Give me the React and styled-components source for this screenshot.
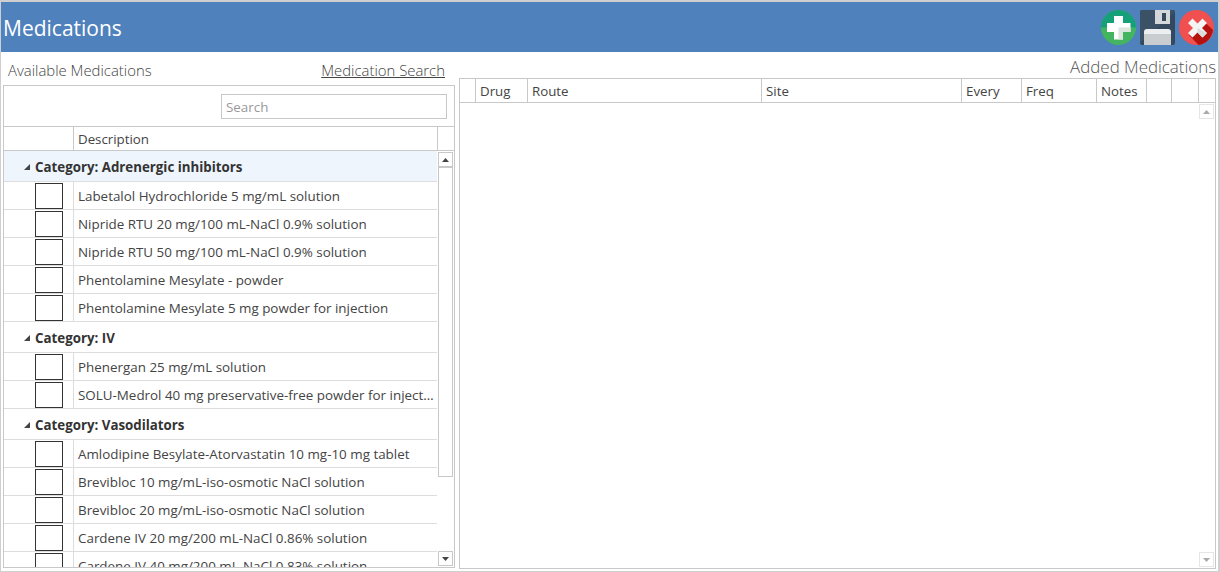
import React from "react";
import styled, { createGlobalStyle } from "styled-components";

const GlobalStyle = createGlobalStyle`
	html, body {
		margin: 0;
		padding: 0;
		background: #fff;
	}
	* {
		box-sizing: border-box;
	}
`;

const Window = styled.div`
	width: 1220px;
	height: 572px;
	background: #fff;
	border-style: solid;
	border-color: #cfcfcf;
	border-width: 2px 2px 1px 1px;
	font-family: "Open Sans", "Liberation Sans", sans-serif;
	color: #444;
	overflow: hidden;
	display: flex;
	flex-direction: column;
`;

const TitleBar = styled.div`
	height: 50px;
	flex: none;
	background: #4f81bd;
	display: flex;
	align-items: center;
	justify-content: space-between;
	padding: 0 4px 0 2px;
`;

const Title = styled.h1`
	margin: 2px 0 0;
	font-size: 21px;
	font-weight: 400;
	color: #fff;
`;

const Actions = styled.div`
	display: flex;
	align-items: center;
	gap: 4px;
`;

const Body = styled.div`
	flex: 1;
	min-height: 0;
	display: flex;
	padding-left: 2px;
	gap: 4px;
`;

const LeftColumn = styled.div`
	width: 452px;
	flex: none;
	display: flex;
	flex-direction: column;
`;

const RightColumn = styled.div`
	width: 757px;
	flex: none;
	display: flex;
	flex-direction: column;
`;

const LeftHead = styled.div`
	height: 33px;
	flex: none;
	display: flex;
	align-items: center;
	justify-content: space-between;
	padding: 2px 10px 0 5px;
	font-size: 14.9px;
	font-weight: 300;
`;

const SearchLink = styled.a`
	text-decoration: underline;
	color: #444;
`;

const RightHead = styled.div`
	height: 26px;
	flex: none;
	text-align: right;
	font-size: 16.9px;
	font-weight: 300;
	line-height: 29px;
	color: #555;
`;

const Panel = styled.div`
	height: ${(p) => p.$h}px;
	border: 1px solid #c8c8c8;
	display: flex;
	flex-direction: column;
	position: relative;
	overflow: hidden;
`;

const SearchRow = styled.div`
	height: 41px;
	flex: none;
	display: flex;
	justify-content: flex-end;
	padding: 8px 7px 0 0;
	border-bottom: 1px solid #c8c8c8;
`;

const SearchInput = styled.input`
	width: 226px;
	height: 25px;
	border: 1px solid #c8c8c8;
	padding: 0 4px;
	font-family: inherit;
	font-size: 13.4px;
	outline: none;
	&::placeholder {
		color: #999;
	}
`;

const GridHead = styled.div`
	height: 24px;
	flex: none;
	display: flex;
	border-bottom: 1px solid #c8c8c8;
`;

const HeadCell = styled.div`
	width: ${(p) => p.$w}px;
	flex: ${(p) => (p.$w ? "none" : "1")};
	border-right: ${(p) => (p.$last ? "none" : "1px solid #c8c8c8")};
	padding-left: 4px;
	font-size: 13.3px;
	line-height: 24px;
	white-space: nowrap;
`;

const ListArea = styled.div`
	flex: 1;
	min-height: 0;
	display: flex;
	overflow: hidden;
`;

const List = styled.div`
	width: 433px;
	flex: none;
`;

const GroupRow = styled.div`
	height: 31px;
	display: flex;
	align-items: center;
	gap: 5px;
	padding: 2px 0 0 20px;
	font-size: 13.3px;
	font-weight: 700;
	color: #333;
	border-bottom: 1px solid #ddd;
	background: ${(p) => (p.$active ? "#eef5fc" : "#fff")};
`;

const Caret = styled.span`
	width: 0;
	height: 0;
	border-style: solid;
	border-width: 0 0 6px 6px;
	border-color: transparent transparent #444 transparent;
`;

const Row = styled.div`
	height: 28px;
	display: flex;
	border-bottom: 1px solid #ddd;
`;

const CheckCell = styled.div`
	width: 70px;
	flex: none;
	display: flex;
	justify-content: flex-end;
	padding: 1px 10px 0 0;
	border-right: 1px solid #ddd;
`;

const CheckBox = styled.span`
	display: block;
	width: 28px;
	height: 26px;
	border: 1px solid #333;
	background: #fff;
`;

const DescCell = styled.div`
	flex: 1;
	min-width: 0;
	padding: 0 3px 0 4px;
	font-size: 13.4px;
	line-height: 28px;
	white-space: nowrap;
	overflow: hidden;
	text-overflow: ellipsis;
`;

const ScrollTrack = styled.div`
	width: 15px;
	flex: none;
	margin: 1px 0 1px 1px;
	height: 414px;
	display: flex;
	flex-direction: column;
	justify-content: space-between;
	position: relative;
`;

const ScrollButton = styled.div`
	width: 15px;
	height: 15px;
	border: 1px solid #c8c8c8;
	background: #fff;
	display: flex;
	align-items: center;
	justify-content: center;
	color: #444;
`;

const Thumb = styled.div`
	position: absolute;
	top: 15px;
	left: 0;
	width: 15px;
	height: 310px;
	border: 1px solid #c8c8c8;
	background: #fff;
`;

const RightHeader = styled.div`
	height: 24px;
	flex: none;
	display: flex;
	border-bottom: 1px solid #c8c8c8;
`;

const RightBody = styled.div`
	flex: 1;
	min-height: 0;
	display: flex;
	justify-content: flex-end;
	padding: 1px 1px 1px 0;
`;

const RightScroll = styled.div`
	width: 15px;
	display: flex;
	flex-direction: column;
	justify-content: space-between;
	opacity: 0.45;
`;

const Arrow = ({ up }) => (
	<svg width="9" height="6" viewBox="0 0 9 6">
		<path d={up ? "M4.5 1 L8 5 L1 5 Z" : "M1 1 L8 1 L4.5 5 Z"} fill="#444" />
	</svg>
);

const AddIcon = () => (
	<svg width="35" height="35" viewBox="0 0 35 35">
		<circle cx="17.5" cy="17.5" r="17.5" fill="#43b45f" />
		<path d="M0 17.5a17.5 17.5 0 0 1 35 0z" fill="#16a07a" />
		<path d="M13 6h9v7h7.5v9H22v7.500h-9V22H6v-9h7z" fill="#fff" />
		<path d="M17.5 17.5h12V22H22v7.5h-4.5z" fill="#dce6e0" />
	</svg>
);

const SaveIcon = () => (
	<svg width="35" height="35" viewBox="0 0 35 35">
		<rect width="35" height="35" rx="2" fill="#34495e" />
		<path d="M0 2a2 2 0 0 1 2-2h13v14h15V0h3a2 2 0 0 1 2 2L0 33z" fill="#3b5266" />
		<rect x="15" y="0" width="15" height="14" fill="#d5d8da" />
		<rect x="22" y="3" width="4" height="8" fill="#34495e" />
		<path d="M4 22a3 3 0 0 1 3-3h21a3 3 0 0 1 3 3v13H4z" fill="#eceeef" />
		<rect x="4" y="24" width="27" height="11" fill="#c9cdd0" />
	</svg>
);

const CloseIcon = () => (
	<svg width="35" height="35" viewBox="0 0 35 35">
		<circle cx="17.5" cy="17.5" r="17.5" fill="#f05050" />
		<path d="M23 9.5L34 20a17.5 17.5 0 0 1-14.5 15L10 25z" fill="#b5120f" />
		<path d="M13.5 8.5l5 5 5-5 4.5 4.5-5 5 5 5-4.5 4.5-5-5-5 5-4.500-4.500 5-5-5-5z" fill="#f4f4f4" />
		<path d="M18.500 18l9.500 5-4.500 4.500-5-5z" fill="#dcdcdc" />
	</svg>
);

const groups = [
	{
		name: "Adrenergic inhibitors",
		active: true,
		items: [
			"Labetalol Hydrochloride 5 mg/mL solution",
			"Nipride RTU 20 mg/100 mL-NaCl 0.9% solution",
			"Nipride RTU 50 mg/100 mL-NaCl 0.9% solution",
			"Phentolamine Mesylate - powder",
			"Phentolamine Mesylate 5 mg powder for injection",
		],
	},
	{
		name: "IV",
		items: [
			"Phenergan 25 mg/mL solution",
			"SOLU-Medrol 40 mg preservative-free powder for injection",
		],
	},
	{
		name: "Vasodilators",
		items: [
			"Amlodipine Besylate-Atorvastatin 10 mg-10 mg tablet",
			"Brevibloc 10 mg/mL-iso-osmotic NaCl solution",
			"Brevibloc 20 mg/mL-iso-osmotic NaCl solution",
			"Cardene IV 20 mg/200 mL-NaCl 0.86% solution",
			"Cardene IV 40 mg/200 mL-NaCl 0.83% solution",
		],
	},
];

const columns = [
	{ w: 16 },
	{ w: 52, label: "Drug" },
	{ w: 234, label: "Route" },
	{ w: 200, label: "Site" },
	{ w: 60, label: "Every" },
	{ w: 75, label: "Freq" },
	{ w: 50, label: "Notes" },
	{ w: 25 },
	{ w: 27 },
	{ w: 0, last: true },
];

const App = () => {
	return (
		<Window>
			<GlobalStyle />
			<TitleBar>
				<Title>Medications</Title>
				<Actions>
					<AddIcon />
					<SaveIcon />
					<CloseIcon />
				</Actions>
			</TitleBar>
			<Body>
				<LeftColumn>
					<LeftHead>
						<span>Available Medications</span>
						<SearchLink>Medication Search</SearchLink>
					</LeftHead>
					<Panel $h={483}>
						<SearchRow>
							<SearchInput placeholder="Search" />
						</SearchRow>
						<GridHead>
							<HeadCell $w={70} />
							<HeadCell $w={364}>Description</HeadCell>
							<HeadCell $last />
						</GridHead>
						<ListArea>
							<List>
								{groups.map((group) => (
									<div key={group.name}>
										<GroupRow $active={group.active}>
											<Caret />
											Category: {group.name}
										</GroupRow>
										{group.items.map((item) => (
											<Row key={item}>
												<CheckCell>
													<CheckBox />
												</CheckCell>
												<DescCell>{item}</DescCell>
											</Row>
										))}
									</div>
								))}
							</List>
							<ScrollTrack>
								<Thumb />
								<ScrollButton>
									<Arrow up />
								</ScrollButton>
								<ScrollButton>
									<Arrow />
								</ScrollButton>
							</ScrollTrack>
						</ListArea>
					</Panel>
				</LeftColumn>
				<RightColumn>
					<RightHead>Added Medications</RightHead>
					<Panel $h={491}>
						<RightHeader>
							{columns.map((col, i) => (
								<HeadCell key={i} $w={col.w} $last={col.last}>
									{col.label}
								</HeadCell>
							))}
						</RightHeader>
						<RightBody>
							<RightScroll>
								<ScrollButton>
									<Arrow up />
								</ScrollButton>
								<ScrollButton>
									<Arrow />
								</ScrollButton>
							</RightScroll>
						</RightBody>
					</Panel>
				</RightColumn>
			</Body>
		</Window>
	);
};

export default App;
